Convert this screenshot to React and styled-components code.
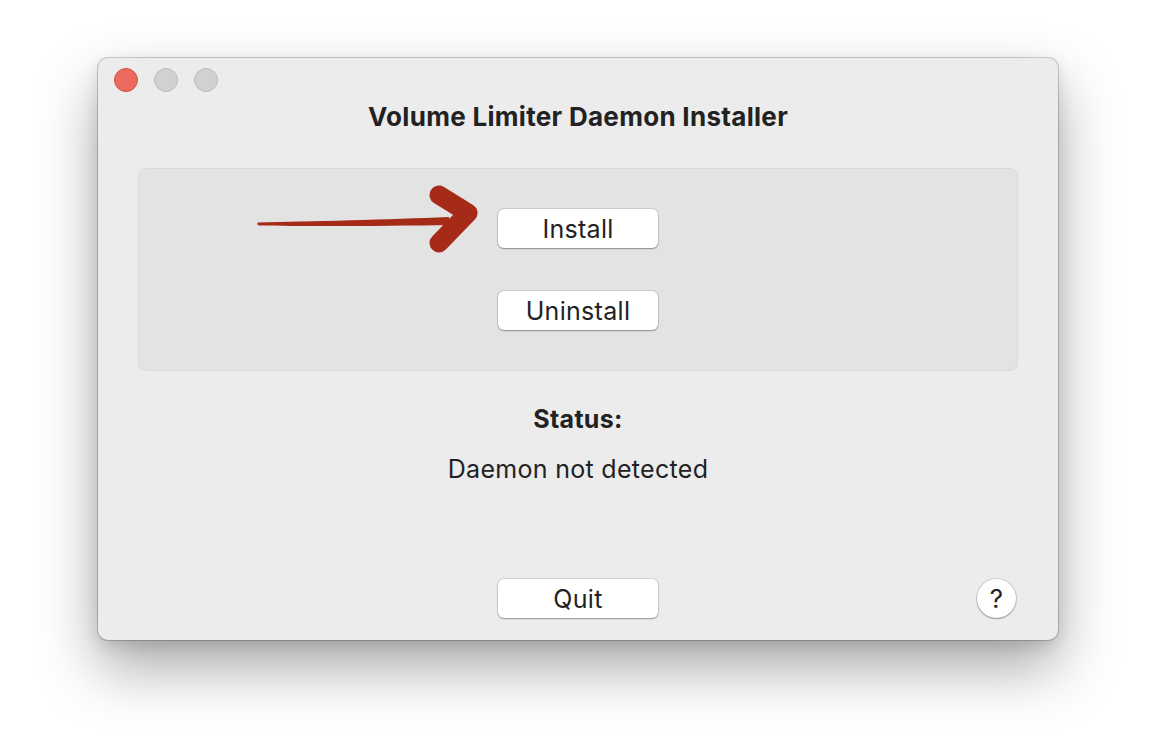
import React from 'react';
import styled, { createGlobalStyle } from 'styled-components';

const GlobalStyle = createGlobalStyle`
html, body {
    margin: 0;
    padding: 0;
    background: #ffffff;
}
body {
    font-family: Inter, "Liberation Sans", Arial, sans-serif;
    -webkit-font-smoothing: antialiased;
}
`

const Page = styled.div`
width: 1152px;
height: 742px;
padding: 58px 0 0 98px;
box-sizing: border-box;
overflow: hidden;
`

const Window = styled.div`
width: 960px;
height: 582px;
box-sizing: border-box;
background: #ececec;
border-radius: 10px;
box-shadow: 0 0 0 1px rgba(0, 0, 0, 0.18), 0 28px 60px rgba(0, 0, 0, 0.34), 0 6px 16px rgba(0, 0, 0, 0.12);
display: flex;
flex-direction: column;
align-items: center;
padding: 10px 40px 22px;
`

const TitleBar = styled.div`
align-self: stretch;
margin: 0 -24px;
display: flex;
gap: 16px;
`

const Light = styled.span`
width: 24px;
height: 24px;
border-radius: 50%;
box-sizing: border-box;
background: ${p => p.$red ? '#ec6a5e' : '#d1d1d1'};
border: 1px solid ${p => p.$red ? '#d25144' : '#bcbcbc'};
`

const Title = styled.h1`
margin: 11px 0 0;
font-size: 26px;
line-height: 28px;
font-weight: 700;
letter-spacing: 0.3px;
color: #222;
`

const Group = styled.div`
align-self: stretch;
margin-top: 37px;
height: 203px;
box-sizing: border-box;
background: #e3e3e3;
border: 1px solid #dadada;
border-radius: 8px;
position: relative;
display: flex;
flex-direction: column;
align-items: center;
padding-top: 40px;
gap: 43px;
`

const Button = styled.button`
width: 160px;
height: 39px;
background: #ffffff;
border: none;
border-radius: 6px;
box-shadow: 0 0 0 1px rgba(0, 0, 0, 0.1), 0 1px 1.5px rgba(0, 0, 0, 0.3);
font-family: inherit;
font-size: 25px;
letter-spacing: 0.3px;
color: #222;
padding: 0;
cursor: pointer;
`

// hand-drawn annotation over the group box
const Arrow = styled.svg`
position: absolute;
left: 110px;
top: 12px;
`

const StatusLabel = styled.div`
margin-top: 34px;
font-size: 25px;
line-height: 28px;
font-weight: 700;
letter-spacing: 0.3px;
color: #222;
`

const StatusText = styled.div`
margin-top: 22px;
font-size: 25px;
line-height: 28px;
letter-spacing: 0.3px;
color: #222;
`

const Footer = styled.div`
align-self: stretch;
margin-top: auto;
position: relative;
display: flex;
justify-content: center;
`

const Help = styled.button`
position: absolute;
right: 2px;
top: 0;
width: 39px;
height: 39px;
border-radius: 50%;
border: none;
background: #fff;
box-shadow: 0 0 0 1px rgba(0, 0, 0, 0.12), 0 1px 1.5px rgba(0, 0, 0, 0.3);
font-family: inherit;
font-size: 26px;
font-weight: 400;
color: #222;
padding: 0;
`

export default function App() {
    return (
        <Page>
            <GlobalStyle />
            <Window>
                <TitleBar>
                    <Light $red />
                    <Light />
                    <Light />
                </TitleBar>
                <Title>Volume Limiter Daemon Installer</Title>
                <Group>
                    <Arrow width="240" height="90" viewBox="0 0 240 90">
                        <path d="M9 41.5 C60 40.5 140 38.5 200 36 L202 44 C140 45 60 45.5 10 44.5 Q7 43 9 41.5 Z" fill="#a52a17" />
                        <path d="M190 14 L219 32 L190 62" fill="none" stroke="#a52a17" strokeWidth="19" strokeLinecap="round" strokeLinejoin="round" />
                    </Arrow>
                    <Button>Install</Button>
                    <Button>Uninstall</Button>
                </Group>
                <StatusLabel>Status:</StatusLabel>
                <StatusText>Daemon not detected</StatusText>
                <Footer>
                    <Button>Quit</Button>
                    <Help>?</Help>
                </Footer>
            </Window>
        </Page>
    );
}
